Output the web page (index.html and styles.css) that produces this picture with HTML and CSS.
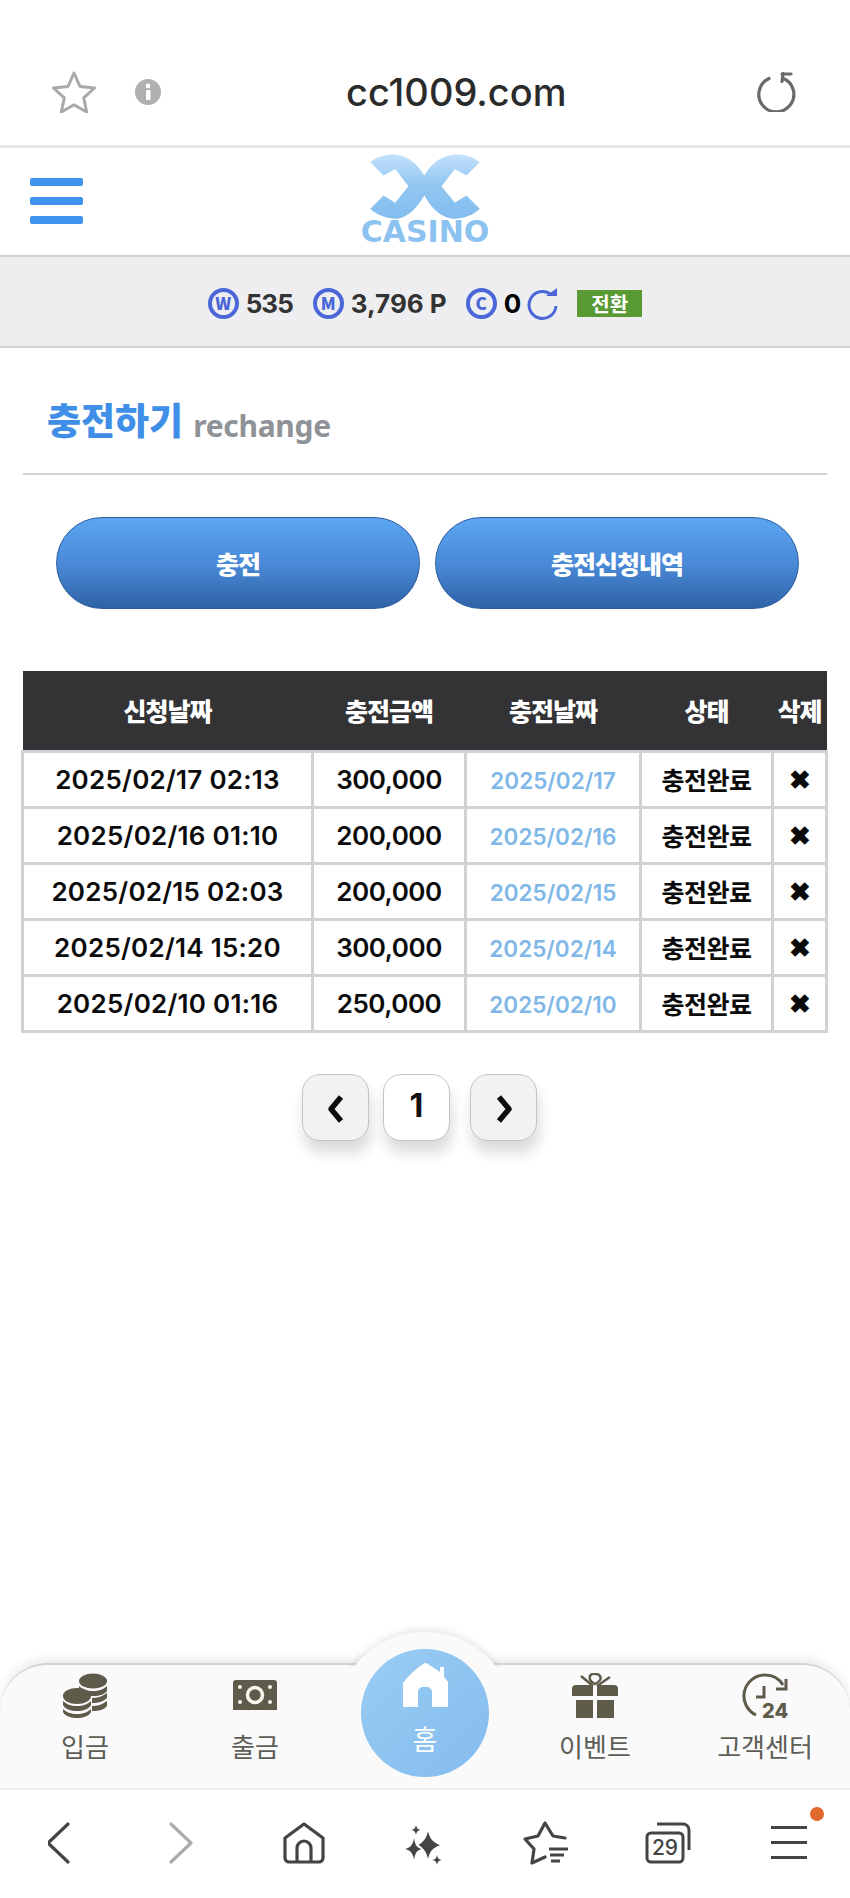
FILE: index.html
```html
<!DOCTYPE html>
<html lang="ko">
<head>
  <meta charset="UTF-8" />
  <title>cc1009.com</title>
  <link rel="stylesheet" href="styles.css">
</head>
<body>

  <div class="urlbar">
    <svg class="url-star" viewBox="0 0 44 42"><path d="M22 2l6 13.500 14.500 1.500-10.800 9.800 3 14.200-12.700-7.300-12.700 7.300 3-14.200L1.500 17 16 15.500z" fill="none" stroke="#a9a9a9" stroke-width="3" stroke-linejoin="round"/></svg>
    <svg class="url-info" viewBox="0 0 26 26"><circle cx="13" cy="13" r="13" fill="#b0b0b0"/><rect x="11" y="11" width="4.500" height="10" rx="1" fill="#fff"/><circle cx="13" cy="7" r="2.400" fill="#fff"/></svg>
    <div class="url-text">cc1009.com</div>
    <svg class="url-reload" viewBox="0 0 40 40"><path d="M13 6.500a17.500 17.500 0 1 0 14-.3M27 1.500l-1 8M26 2h9" fill="none" stroke="#6a6a6a" stroke-width="3.200" stroke-linecap="round"/></svg>
  </div>

  <header class="site-head">
    <div class="burger"><span></span><span></span><span></span></div>
    <div class="logo">
      <svg viewBox="95 40 330 196" class="logo-mark">
        <defs>
          <linearGradient id="lg" x1="0" y1="0" x2="0" y2="1"><stop offset="0" stop-color="#c4e1f9"/><stop offset=".45" stop-color="#93c7f2"/><stop offset="1" stop-color="#82bdef"/></linearGradient>
        </defs>
        <path fill="url(#lg)" d="M95 65C115 46 150 40 175 42C215 48 240 75 258 105C275 75 300 48 345 42C375 40 405 48 425 65L385 105L350 85L310 137L350 187L385 165L425 205C405 225 375 236 345 235C300 230 275 195 258 165C240 195 215 230 175 235C150 236 115 225 95 205L135 165L170 187L210 137L170 85L135 105Z"/>
      </svg>
      <div class="logo-text">CASINO</div>
    </div>
  </header>

  <div class="balance">
    <span class="coin">W</span><b class="amt">535</b>
    <span class="coin coin-m">M</span><b class="amt amt-wide">3,796 P</b>
    <span class="coin coin-c">C</span><b class="amt amt-zero">0</b>
    <svg class="refresh" viewBox="0 0 32 34"><path d="M24 7.500A13.500 13.500 0 1 0 29 19" fill="none" stroke="#4a66d8" stroke-width="3"/><path d="M19 9h11V1z" fill="#4a66d8"/></svg>
    <span class="swap">전환</span>
  </div>

  <div class="page-title">
    <span class="title-ko">충전하기</span>
    <span class="title-en">rechange</span>
  </div>

  <div class="actions">
    <button>충전</button>
    <button>충전신청내역</button>
  </div>

  <table class="history">
    <colgroup>
      <col class="c-date"><col class="c-amount"><col class="c-paid"><col class="c-state"><col class="c-del">
    </colgroup>
    <thead>
      <tr><th>신청날짜</th><th>충전금액</th><th>충전날짜</th><th>상태</th><th>삭제</th></tr>
    </thead>
    <tbody>
      <tr><td class="stamp">2025/02/17 02:13</td><td>300,000</td><td class="paid">2025/02/17</td><td class="state">충전완료</td><td class="del">✖</td></tr>
      <tr><td class="stamp">2025/02/16 01:10</td><td>200,000</td><td class="paid">2025/02/16</td><td class="state">충전완료</td><td class="del">✖</td></tr>
      <tr><td class="stamp">2025/02/15 02:03</td><td>200,000</td><td class="paid">2025/02/15</td><td class="state">충전완료</td><td class="del">✖</td></tr>
      <tr><td class="stamp">2025/02/14 15:20</td><td>300,000</td><td class="paid">2025/02/14</td><td class="state">충전완료</td><td class="del">✖</td></tr>
      <tr><td class="stamp">2025/02/10 01:16</td><td>250,000</td><td class="paid">2025/02/10</td><td class="state">충전완료</td><td class="del">✖</td></tr>
    </tbody>
  </table>

  <div class="pager">
    <a class="page-btn grey"><svg viewBox="0 0 20 30" width="20" height="30"><path d="M15 3L5 15l10 12" fill="none" stroke="#0c0c0c" stroke-width="5.500" stroke-linejoin="round"/></svg></a>
    <a class="page-btn one">1</a>
    <a class="page-btn grey last"><svg viewBox="0 0 20 30" width="20" height="30"><path d="M5 3l10 12L5 27" fill="none" stroke="#0c0c0c" stroke-width="5.500" stroke-linejoin="round"/></svg></a>
  </div>

  <div class="spacer"></div>

  <nav class="bottom-nav">
    <div class="bump"></div>
    <a class="nav-item">
      <svg viewBox="0 0 46 46" width="46" height="46">
        <g fill="#5f5b4a">
          <ellipse cx="31" cy="8" rx="14" ry="7.500"/>
          <path d="M17 13c3 3 8 5 14 5s11-2 14-5v5c-2 3-7 5-14 5-3 0-5 0-7-1-2-2-5-3-7-3z"/>
          <path d="M30 25c6 0 11-2 15-5v5c-3 3-8 5-15 5zM30 33c6 0 11-2 15-5v5c-3 4-8 5-15 5z"/>
          <ellipse cx="15" cy="23" rx="14" ry="8"/>
          <path d="M1 28c3 3 8 5 14 5s11-2 14-5v4c-2 4-8 6-14 6S3 36 1 32zM1 36c3 3 8 5 14 5s11-2 14-5v3c-2 4-8 6-14 6S3 43 1 39z"/>
        </g>
      </svg>
      <span>입금</span>
    </a>
    <a class="nav-item">
      <svg viewBox="0 0 46 46" width="46" height="46">
        <path d="M4 7h38a3 3 0 0 1 3 3v27H1V10a3 3 0 0 1 3-3z" fill="#5f5b4a"/>
        <circle cx="23" cy="22" r="7.500" fill="none" stroke="#f7f5ee" stroke-width="3.500"/>
        <g fill="#f7f5ee"><circle cx="8" cy="14" r="2"/><circle cx="38" cy="14" r="2"/><circle cx="8" cy="29" r="2"/><circle cx="38" cy="29" r="2"/></g>
      </svg>
      <span>출금</span>
    </a>
    <a class="nav-item home">
      <div class="home-disc"></div>
      <svg viewBox="0 0 45 44" width="45" height="44">
        <path d="M0 20C6 12 14 5 20 1a4 4 0 0 1 5 0L37 9V4h4v10l4 5v25H29V29a5 5 0 0 0-5-5h-4a5 5 0 0 0-5 5v15H0z" fill="#fff"/>
      </svg>
      <span>홈</span>
    </a>
    <a class="nav-item">
      <svg viewBox="0 0 46 46" width="46" height="46">
        <g fill="#5f5b4a">
          <path d="M4 12h17v11H0v-7a4 4 0 0 1 4-4zM25 12h17a4 4 0 0 1 4 4v7H25zM4 27h17v18H4zM25 27h17v18H25z"/>
        </g>
        <g fill="none" stroke="#5f5b4a" stroke-width="2.500">
          <path d="M23 11c-4-2-6-5-5-8 1-3 8-3 10 0s-1 6-5 8z"/>
          <path d="M21 13L9 3M25 13L38 4"/>
        </g>
      </svg>
      <span>이벤트</span>
    </a>
    <a class="nav-item">
      <svg class="clock" viewBox="0 0 46 46" width="46" height="46">
        <path d="M14 42A21 21 0 0 1 23 2A21 21 0 0 1 41 12" fill="none" stroke="#5f5b4a" stroke-width="3"/>
        <path d="M44 6v10H34M22 13v11h-8" fill="none" stroke="#5f5b4a" stroke-width="3"/>
        <text x="20" y="45" class="clock-num">24</text>
      </svg>
      <span>고객센터</span>
    </a>
  </nav>

  <div class="toolbar">
    <a><svg viewBox="3 0 26 42" width="26" height="42"><path d="M23 2L3 21l20 19" fill="none" stroke="#444" stroke-width="3.200" stroke-linecap="round" stroke-linejoin="round"/></svg></a>
    <a><svg viewBox="1 0 26 42" width="26" height="42"><path d="M3 2l20 19L3 40" fill="none" stroke="#ababab" stroke-width="3.200" stroke-linecap="round" stroke-linejoin="round"/></svg></a>
    <a><svg viewBox="0 0 42 42" width="42" height="42"><path d="M2 16L21 2l19 14v20a4 4 0 0 1-4 4H6a4 4 0 0 1-4-4z" fill="none" stroke="#444" stroke-width="3.200" stroke-linejoin="round"/><path d="M14 40V26a7 7 0 0 1 14 0v14" fill="none" stroke="#444" stroke-width="3.200"/></svg></a>
    <a><svg viewBox="0 0 60 60" width="60" height="60">
      <path fill="#444" d="M19 25c1 7 3 10 8 11-5 1-7 4-8 11-1-7-4-10-9-11 5-1 8-4 9-11zM21 12c.6 3 1.500 4.400 5 5-3.500.6-4.400 2-5 5-.6-3-1.500-4.400-5-5 3.500-.6 4.400-2 5-5zM42 42c.6 3 1.500 4.400 5 5-3.500.6-4.400 2-5 5-.6-3-1.500-4.400-5-5 3.500-.6 4.400-2 5-5z"/>
      <path fill="#444" stroke="#fff" stroke-width="1.500" d="M33 15c2 10 4.500 13.500 14 17-9.500 3.500-12 7-14 17-2-10-4.500-13.500-11-17 6.500-3.500 9-7 11-17z"/>
    </svg></a>
    <a><svg viewBox="0 0 46 44" width="46" height="44"><path d="M42 17l-12-2L22 2l-7 13-13 3 9 10-2 14 13-6" fill="none" stroke="#444" stroke-width="3.200" stroke-linejoin="round" stroke-linecap="round"/><path d="M26 28h19M27 34h14M28 40h9" stroke="#444" stroke-width="3"/></svg></a>
    <a><svg viewBox="0 0 46 42" width="46" height="42"><rect x="2" y="11" width="36" height="29" rx="4" fill="none" stroke="#444" stroke-width="3"/><path d="M12 2h26a6 6 0 0 1 6 6v20" fill="none" stroke="#444" stroke-width="3"/><text x="20" y="33" class="tab-num">29</text></svg></a>
    <a class="menu-link"><span class="lines"><i></i><i></i><i></i></span><em class="dot"></em></a>
  </div>

</body>
</html>
```
FILE: styles.css
```css
* {
  box-sizing: border-box;
}

body {
  font-family: "Noto Sans CJK KR", "Noto Sans", sans-serif;
  margin: 0;
  width: 850px;
  height: 1898px;
  overflow: hidden;
  background-color: #fff;
  display: flex;
  flex-direction: column;
  color: #111;
}

/* browser address bar */
.urlbar {
  height: 148px;
  padding: 38px 54px 0 52px;
  display: flex;
  align-items: center;
  border-bottom: 3px solid #e8e8ea;
}

.url-star {
  width: 44px;
  height: 42px;
}

.url-info {
  width: 26px;
  height: 26px;
  margin-left: 39px;
}

.url-text {
  margin-left: 185px;
  font-family: Inter, "Liberation Sans", sans-serif;
  font-size: 38px;
  font-weight: 500;
  color: #2b2b2b;
}

.url-reload {
  width: 40px;
  height: 40px;
  margin-left: auto;
}

/* site header */
.site-head {
  height: 109px;
  position: relative;
  display: flex;
  align-items: center;
  justify-content: center;
  border-bottom: 2px solid #d0d0d3;
}

.burger {
  position: absolute;
  left: 30px;
  top: 30px;
  width: 53px;
}

.burger span {
  display: block;
  height: 8px;
  margin-bottom: 11px;
  background-color: #3f92ee;
  border-radius: 2px;
}

.logo {
  padding-bottom: 6px;
  display: flex;
  flex-direction: column;
  align-items: center;
}

.logo-mark {
  width: 110px;
  height: 65px;
}

.logo-text {
  font-family: "DejaVu Sans", sans-serif;
  font-weight: bold;
  font-size: 30px;
  line-height: 24px;
  margin-top: 1px;
  color: #8cc2f0;
}

/* balance strip */
.balance {
  height: 91px;
  padding-top: 4px;
  background-color: #eeeef0;
  border-bottom: 2px solid #d0d0d3;
  display: flex;
  align-items: center;
  justify-content: center;
  font-size: 26px;
}

.coin {
  width: 31px;
  height: 31px;
  border: 4px solid #4a66d8;
  border-radius: 50%;
  color: #4a66d8;
  font-size: 17px;
  font-weight: 900;
  line-height: 21px;
  text-align: center;
}

.coin-m {
  margin-left: 20px;
}

.coin-c {
  margin-left: 19px;
}

.amt {
  margin-left: 7px;
  color: #333;
  font-family: Inter, "Liberation Sans", sans-serif;
  font-weight: 700;
  letter-spacing: -1px;
}

.amt-wide {
  letter-spacing: 0;
}

.amt-zero {
  color: #000;
}

.refresh {
  width: 32px;
  height: 34px;
  margin-left: 7px;
}

.swap {
  width: 65px;
  height: 27px;
  margin-left: 18px;
  background-color: #5a9a35;
  color: #fff;
  font-size: 20px;
  font-weight: 700;
  line-height: 27px;
  text-align: center;
}

/* page title */
.page-title {
  height: 127px;
  margin: 0 23px;
  padding: 46px 0 0 24px;
  border-bottom: 2px solid #d3d3d6;
  display: flex;
  align-items: baseline;
}

.title-ko {
  font-size: 37px;
  font-weight: 900;
  line-height: 50px;
  color: #3f8fe8;
}

.title-en {
  margin-left: 10px;
  font-family: "Noto Sans", sans-serif;
  font-size: 30px;
  font-weight: 700;
  letter-spacing: -.3px;
  color: #8f9296;
  transform: translateY(2px);
}

/* action buttons */
.actions {
  margin-top: 42px;
  padding: 0 51px 0 56px;
  display: flex;
  gap: 15px;
}

.actions button {
  flex: 1;
  height: 92px;
  border: 1px solid #2f5f9f;
  border-radius: 46px;
  background: linear-gradient(#5ba6f1, #4a8ad8 50%, #2f62a6);
  color: #fff;
  font-family: inherit;
  font-size: 25px;
  font-weight: 900;
  letter-spacing: -1px;
}

/* history table */
.history {
  margin: 62px 25px 0 21px;
  width: 804px;
  table-layout: fixed;
  border-collapse: collapse;
  text-align: center;
}

.c-date { width: 290px; }
.c-amount { width: 153px; }
.c-paid { width: 175px; }
.c-state { width: 132px; }
.c-del { width: 54px; }

.history th {
  height: 80px;
  padding: 0;
  background-color: #333335;
  color: #fff;
  font-size: 25px;
  font-weight: 900;
  letter-spacing: -1px;
}

.history td {
  height: 56px;
  padding: 0;
  border: 3px solid #d2d2d6;
  font-family: Inter, "Noto Sans CJK KR", sans-serif;
  font-size: 26px;
  font-weight: 600;
  letter-spacing: -.5px;
  color: #0b0b0b;
}

.history td.stamp {
  letter-spacing: .25px;
}

.history td.paid {
  font-size: 22.500px;
  color: #7fb8e8;
  letter-spacing: 0;
  padding-top: 3px;
}

.history td.state {
  font-family: "Noto Sans CJK KR", sans-serif;
  font-size: 25px;
  font-weight: 700;
  letter-spacing: -.5px;
}

.history td.del {
  font-size: 26px;
}

/* pager */
.pager {
  margin-top: 41px;
  display: flex;
  justify-content: center;
  padding-right: 11px;
  gap: 14px;
}

.page-btn {
  width: 67px;
  height: 67px;
  border: 1px solid #c4c4c8;
  border-radius: 18px;
  background-color: #fff;
  box-shadow: 2px 12px 14px rgba(0,0,0,0.14);
  display: flex;
  align-items: center;
  justify-content: center;
  font-family: Inter, sans-serif;
  font-size: 32px;
  font-weight: 700;
}

.page-btn.grey {
  background-color: #f2f2f4;
  padding-top: 4px;
}

.page-btn.one {
  padding-bottom: 3px;
}

.page-btn.last {
  margin-left: 6px;
}

.spacer {
  flex: 1;
}

/* site bottom nav */
.bottom-nav {
  position: relative;
  height: 125px;
  background-color: #fafafa;
  border-top: 2px solid #d4d4d6;
  border-radius: 48px 48px 0 0;
  box-shadow: 0 -5px 8px rgba(0,0,0,0.07);
  display: grid;
  grid-template-columns: repeat(5, 1fr);
}

.bump {
  position: absolute;
  left: 335px;
  top: -33px;
  width: 180px;
  height: 100px;
  border-radius: 90px 90px 0 0;
  background-color: #fafafa;
  box-shadow: 0 -4px 6px rgba(0,0,0,0.08);
  clip-path: inset(-12px -4px 65px -4px);
}

.nav-item {
  position: relative;
  padding-top: 8px;
  display: flex;
  flex-direction: column;
  align-items: center;
  font-size: 26px;
  line-height: 36px;
  color: #5d5d58;
}

.nav-item span {
  margin-top: 9px;
  position: relative;
}

.home-disc {
  position: absolute;
  left: 21px;
  top: -16px;
  width: 128px;
  height: 128px;
  border-radius: 50%;
  background: linear-gradient(135deg, #9accf4, #84bcee);
}

.nav-item.home svg {
  position: relative;
  margin-top: -10px;
}

.nav-item.home span {
  margin-top: 14px;
  font-size: 27px;
  color: #fff;
}

.clock {
  overflow: visible;
}

.clock-num {
  font-family: Inter, sans-serif;
  font-size: 20px;
  font-weight: 800;
  fill: #5f5b4a;
}

/* browser toolbar */
.toolbar {
  height: 110px;
  padding-bottom: 3px;
  background-color: #fff;
  border-top: 2px solid #ececee;
  position: relative;
  display: grid;
  grid-template-columns: repeat(7, 1fr);
  align-items: center;
  justify-items: center;
}

.toolbar a {
  display: flex;
}

.tab-num {
  font-family: Inter, sans-serif;
  font-size: 21px;
  font-weight: 500;
  fill: #444;
  text-anchor: middle;
}

.menu-link {
  position: relative;
}

.lines i {
  display: block;
  width: 36px;
  height: 3px;
  margin: 12px 0;
  background-color: #444;
}

.dot {
  position: absolute;
  right: -17px;
  top: -7px;
  width: 14px;
  height: 14px;
  border-radius: 50%;
  background-color: #e0682c;
}
```
